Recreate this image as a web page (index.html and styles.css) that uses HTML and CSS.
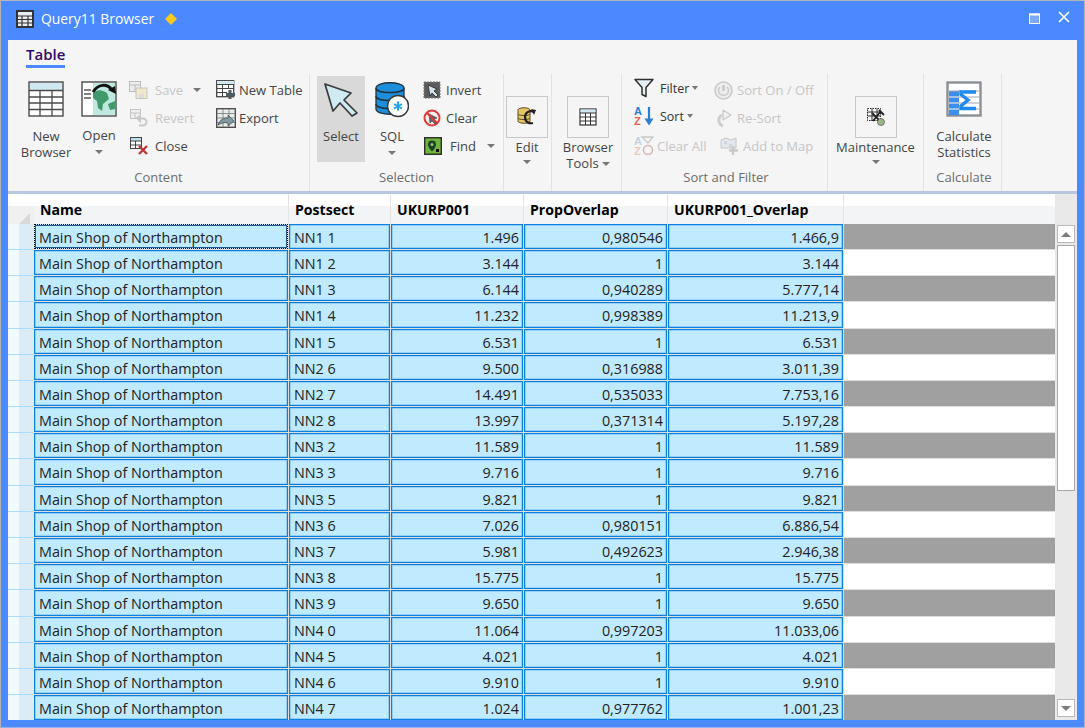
FILE: index.html
```html
<!DOCTYPE html>
<html lang="en">
<head>
<meta charset="utf-8">
<title>Query11 Browser</title>
<link rel="stylesheet" href="styles.css">
</head>
<body>
<div class="window">
  <header class="titlebar">
    <svg class="title-icon" width="18" height="18" viewBox="0 0 18 18"><rect x="1" y="1" width="16" height="16" fill="#e8eef2" stroke="#333" stroke-width="2"/><path d="M1 6h16M1 9.500h16M1 13h16M6 6v11M12 6v11" stroke="#333" stroke-width="1.200" fill="none"/></svg>
    <span class="title-text">Query11 Browser</span>
    <svg class="title-diamond" width="12" height="12" viewBox="0 0 12 12"><path d="M6 0l6 6-6 6-6-6z" fill="#f7c91c"/></svg>
    <span class="title-space"></span>
    <svg class="win-btn" width="11" height="11" viewBox="0 0 11 11"><rect x=".5" y="1" width="10" height="9.500" fill="#7fa9f5" stroke="#fff"/><path d="M0 1.500h11" stroke="#fff" stroke-width="2"/></svg>
    <svg class="win-btn win-close" width="12" height="12" viewBox="0 0 12 12"><path d="M1 1l10 10M11 1L1 11" stroke="#fff" stroke-width="1.600"/></svg>
  </header>

  <section class="ribbon">
    <div class="tabs"><span class="tab">Table</span></div>
    <div class="groups">

      <div class="group g-content">
        <div class="group-body">
          <div class="large w-new">
            <svg class="ico-top" width="36" height="36" viewBox="0 0 36 36"><rect x="1" y="1" width="34" height="34" fill="#fff" stroke="#4a4a4a" stroke-width="1.400"/><rect x="2" y="2" width="32" height="7.500" fill="#cfe8f1"/><path d="M1 9.500h34M1 16h34M1 22h34M1 28.500h34M12 9.500V35M24 9.500V35" stroke="#4a4a4a" stroke-width="1.300" fill="none"/></svg>
            <span class="lbl lbl-first">New</span><span class="lbl">Browser</span>
          </div>
          <div class="large w-open">
            <svg class="ico-top" width="36" height="36" viewBox="0 0 36 36"><rect x="1" y="1" width="34" height="34" fill="#fff" stroke="#4a4a4a" stroke-width="1.400"/><rect x="12" y="2" width="22" height="32" fill="#bfe8e0"/><path d="M12 12c5-4 9-3 14 0l2 6-6 5-1 7-4-3-1-7-4-3z" fill="#3f9a6c"/><path d="M27 23l7-3v8l-5 1z" fill="#3f9a6c"/><path d="M3 9h7M3 13h7M3 17h7" stroke="#555" stroke-width="1.500"/><path d="M12 11c5-8 14-9 19-2" fill="none" stroke="#111" stroke-width="3"/><path d="M27 9l8 4-1-8z" fill="#111"/></svg>
            <span class="lbl lbl-open">Open</span><i class="caret caret-below"></i>
          </div>
          <div class="small-col w-save">
            <div class="small off"><svg class="ico-s" width="20" height="18" viewBox="0 0 20 18"><rect x=".5" y=".5" width="11" height="10" fill="#eee" stroke="#bbb"/><path d="M.5 4h11M6 4v7" stroke="#bbb"/><rect x="7" y="7" width="11" height="10.500" fill="#f1e8cc" stroke="#c4c4c4"/><rect x="10" y="13" width="5" height="4" fill="#ddd"/></svg><span>Save</span><i class="caret caret-save"></i></div>
            <div class="small off"><svg class="ico-s" width="20" height="18" viewBox="0 0 20 18"><rect x="1.500" y=".5" width="10" height="9" fill="#eee" stroke="#c4c4c4"/><path d="M1.500 4h10M6 4v6" stroke="#c4c4c4"/><path d="M8 9l3-2v5zM10 9.500h4a3.500 3.500 0 0 1 0 7h-4" fill="none" stroke="#c9c9c9" stroke-width="2"/></svg><span>Revert</span></div>
            <div class="small"><svg class="ico-s" width="20" height="18" viewBox="0 0 20 18"><rect x="1.500" y=".5" width="11" height="11" fill="#fff" stroke="#444"/><rect x="2" y="1" width="10" height="3" fill="#bfe3ee"/><path d="M1.500 4h11M1.500 8h11M6.500 4v8" stroke="#444"/><path d="M10 9l8 8M18 9l-8 8" stroke="#c0353a" stroke-width="2.400"/></svg><span>Close</span></div>
          </div>
          <div class="small-col w-newtable">
            <div class="small tight"><svg class="ico-xs" width="20" height="20" viewBox="0 0 20 20"><rect x=".7" y=".7" width="17" height="16" fill="#fff" stroke="#444" stroke-width="1.300"/><rect x="1" y="1" width="17" height="3" fill="#cfe8f1"/><path d="M1 4.500h17M1 8.500h17M1 12.500h10M6.500 4.500v12M12.500 4.500v4" stroke="#444"/><path d="M14 10v9M10 14.500h9" stroke="#4f5b62" stroke-width="3"/></svg><span>New Table</span></div>
            <div class="small tight"><svg class="ico-xs" width="20" height="20" viewBox="0 0 20 20"><rect x=".7" y=".7" width="18.600" height="18.600" fill="#e6ece8" stroke="#444" stroke-width="1.300"/><path d="M1 5.500h18M1 10h18M1 14.500h18M7 1v18M13 1v18" stroke="#777" stroke-width=".8"/><path d="M2 17c2-6 6-7 10-7v-3l6 6-6 5v-3c-4-1-6 0-10 2z" fill="#7f99a2" stroke="#444" stroke-width=".7"/></svg><span>Export</span></div>
          </div>
        </div>
        <div class="group-label">Content</div>
      </div>

      <div class="group g-selection">
        <div class="group-body">
          <div class="large w-select active">
            <svg class="ico-select" width="34" height="34" viewBox="0 0 34 34"><path d="M1 1l26 9-7 7 13 13-5 3-12-13-7 8z" fill="#cfeaf2" stroke="#3a3a3a" stroke-width="1.700" stroke-linejoin="round"/></svg>
            <span class="lbl lbl-select">Select</span>
          </div>
          <div class="large w-sql">
            <svg class="ico-sql" width="34" height="36" viewBox="0 0 34 36"><path d="M1 6c0-7 28-7 28 0v21c0 7-28 7-28 0z" fill="#1b8fdb" stroke="#24323c" stroke-width="1.300"/><path d="M1 6c0 6 28 6 28 0M1 14c0 6 28 6 28 0M1 22c0 6 28 6 28 0" fill="none" stroke="#24323c" stroke-width="1.500"/><circle cx="23" cy="24" r="10.500" fill="#fff" stroke="#3a3a3a" stroke-width="1.500"/><path d="M23 19.500v9M19 22l8 4.500M27 22l-8 4.500" stroke="#22a0ee" stroke-width="2"/></svg>
            <span class="lbl lbl-open">SQL</span><i class="caret caret-below"></i>
          </div>
          <div class="small-col w-invert">
            <div class="small"><svg class="ico-s2" width="18" height="18" viewBox="0 0 18 18"><rect x="1" y="1" width="16" height="16" fill="#5c5c5c" stroke="#777" stroke-dasharray="2 1"/><path d="M5 4l9 4-3 2 4 4-2 2-4-4-2 3z" fill="#cfe3ea" stroke="#222" stroke-width=".8"/></svg><span>Invert</span></div>
            <div class="small"><svg class="ico-s2" width="18" height="18" viewBox="0 0 18 18"><circle cx="9" cy="9" r="7.500" fill="#f5f0f0" stroke="#e03a3a" stroke-width="2"/><path d="M6 5l8 4-3 1 3 4-2 1-3-3-2 2z" fill="#666" stroke="#333" stroke-width=".6"/><path d="M4 4l10 10" stroke="#e03a3a" stroke-width="2"/></svg><span>Clear</span></div>
            <div class="small"><svg class="ico-s3" width="18" height="18" viewBox="0 0 18 18"><rect x=".7" y=".7" width="16.600" height="16.600" fill="#6fb53a" stroke="#2d2d2d" stroke-width="1.400"/><path d="M8 3.500a4 4 0 0 1 4 4c0 3-4 7-4 7s-4-4-4-7a4 4 0 0 1 4-4z" fill="#1e3d2a"/><circle cx="8" cy="7.500" r="1.500" fill="#8fcf5f"/><rect x="12" y="12" width="3" height="3" fill="#111"/></svg><span>Find</span><i class="caret caret-find"></i></div>
          </div>
        </div>
        <div class="group-label">Selection</div>
      </div>

      <div class="group g-edit">
        <div class="group-body">
          <div class="large w-edit">
            <div class="box"><svg width="20" height="20" viewBox="0 0 20 20"><path d="M1 3c0-3 12-3 12 0v11c0 3-12 3-12 0z" fill="#e6c566" stroke="#5c4d1e"/><path d="M1 7c0 2 12 2 12 0M1 11c0 2 12 2 12 0" fill="none" stroke="#5c4d1e"/><path d="M17 5c-4-2-9 0-9 5s4 7 8 6" fill="none" stroke="#222" stroke-width="2.200"/><path d="M14 2l5 1-2 5z" fill="#222"/></svg></div>
            <span class="lbl lbl-box">Edit</span><i class="caret caret-below2"></i>
          </div>
        </div>
      </div>

      <div class="group g-tools">
        <div class="group-body">
          <div class="large w-tools">
            <div class="box"><svg width="18" height="18" viewBox="0 0 18 18"><rect x="1" y="1" width="16" height="16" fill="#fff" stroke="#333" stroke-width="1.200"/><rect x="1.500" y="1.500" width="15" height="3.500" fill="#cfe8f1"/><path d="M1 5h16M1 9h16M1 13h16M6.500 5v12M11.500 5v12" stroke="#333" fill="none"/></svg></div>
            <span class="lbl lbl-box">Browser</span><span class="lbl">Tools<i class="caret caret-inline"></i></span>
          </div>
        </div>
      </div>

      <div class="group g-sort">
        <div class="group-body">
          <div class="small-col w-filter">
            <div class="small up sm"><svg class="ico-filter" width="20" height="20" viewBox="0 0 20 20"><path d="M1 1.500h18l-7 8v9l-4-2v-7z" fill="#e4f0f3" stroke="#2f2f2f" stroke-width="1.500" stroke-linejoin="round"/></svg><span>Filter</span><i class="caret caret-inline"></i></div>
            <div class="small up sm"><svg class="ico-filter" width="20" height="20" viewBox="0 0 20 20" aria-hidden="true"><text x="0" y="9" class="az az-a">A</text><text x="0" y="19" class="az az-z">Z</text><path d="M15 1v15" stroke="#2b7cd3" stroke-width="2.200"/><path d="M10.500 12.500h9L15 19.500z" fill="#2b7cd3"/></svg><span>Sort</span><i class="caret caret-inline"></i></div>
            <div class="small off"><svg class="ico-clear" width="20" height="20" viewBox="0 0 20 20" aria-hidden="true"><text x="0" y="9" class="az az-off">A</text><text x="0" y="19" class="az az-off2">Z</text><path d="M8 1h11l-5 6-6-6z" fill="none" stroke="#c9c9c9" stroke-width="1.300"/><circle cx="14" cy="14" r="4.500" fill="none" stroke="#d5b5b5" stroke-width="1.500"/></svg><span>Clear All</span></div>
          </div>
          <div class="small-col w-sorton">
            <div class="small off"><svg class="ico-s4" width="19" height="19" viewBox="0 0 19 19"><circle cx="9.500" cy="9.500" r="8.500" fill="#eee" stroke="#c9c9c9" stroke-width="1.600"/><path d="M9.500 4v6" stroke="#c4c4c4" stroke-width="2.200"/><path d="M6 6a5 5 0 1 0 7 0" fill="none" stroke="#c9c9c9" stroke-width="1.500"/></svg><span>Sort On / Off</span></div>
            <div class="small off"><svg class="ico-s4" width="19" height="19" viewBox="0 0 19 19"><path d="M9 17a6 6 0 0 1-1-11" fill="none" stroke="#cfcfcf" stroke-width="3"/><path d="M9 1l8 5-8 5z" fill="#f0f0f0" stroke="#c9c9c9" stroke-width="1.200" stroke-linejoin="round"/></svg><span>Re-Sort</span></div>
            <div class="small off shifted"><svg class="ico-s4" width="19" height="19" viewBox="0 0 19 19"><path d="M1 3l5-2 5 2 5-2v10H1z" fill="#e4e8ee" stroke="#c6c6c6"/><path d="M4 4h3v3H4zM9 7h3v3H9z" fill="#cdd7e0"/><path d="M13 9v9M9 13.500h9" stroke="#c9c9c9" stroke-width="2.400"/></svg><span>Add to Map</span></div>
          </div>
        </div>
        <div class="group-label">Sort and Filter</div>
      </div>

      <div class="group g-maint">
        <div class="group-body">
          <div class="large w-maint">
            <div class="box"><svg width="18" height="18" viewBox="0 0 18 18"><rect x=".5" y=".5" width="13" height="12" fill="#f4f4f4" stroke="#222" stroke-dasharray="1.500 1"/><path d="M.5 4h13M.5 8h13M5 1v12M10 1v8" stroke="#333"/><path d="M5 5l9 9M14 3l-8 10M12 2l5 5" stroke="#222" stroke-width="1.800"/><circle cx="14" cy="14" r="3.500" fill="#9db88c" stroke="#555" stroke-width=".7"/></svg></div>
            <span class="lbl lbl-box">Maintenance</span><i class="caret caret-below2"></i>
          </div>
        </div>
      </div>

      <div class="group g-calc">
        <div class="group-body">
          <div class="large w-calc">
            <svg class="ico-top" width="36" height="36" viewBox="0 0 36 36"><rect x="1.500" y="1.500" width="33" height="33" fill="#fff" stroke="#8a8f94" stroke-width="2.400"/><rect x="3" y="10" width="10" height="24" fill="#3a8fee"/><path d="M3 10h30M3 16h30M3 22h30M3 28h30" stroke="#9ea6ad"/><path d="M3 16h10M3 22h10M3 28h10" stroke="#dbe9f8"/><path d="M30 11H15v2.500l7 5.500-7 6v2.500h15" fill="none" stroke="#1f8af0" stroke-width="3.400"/></svg>
            <span class="lbl lbl-first lbl-calc">Calculate</span><span class="lbl">Statistics</span>
          </div>
        </div>
        <div class="group-label">Calculate</div>
      </div>

    </div>
  </section>

  <main class="grid-area">
    <div class="table">
      <div class="row head">
        <div class="corner"><i class="corner-tri"></i></div>
        <div class="hcell">Name</div><div class="hcell">Postsect</div><div class="hcell">UKURP001</div><div class="hcell">PropOverlap</div><div class="hcell">UKURP001_Overlap</div><div class="hcell hfill"></div>
      </div>
      <div class="row"><div class="rh"></div><div class="cell focus">Main Shop of Northampton</div><div class="cell">NN1 1</div><div class="cell num">1.496</div><div class="cell num">0,980546</div><div class="cell num">1.466,9</div><div class="fill gray"></div></div>
      <div class="row"><div class="rh"></div><div class="cell">Main Shop of Northampton</div><div class="cell">NN1 2</div><div class="cell num">3.144</div><div class="cell num">1</div><div class="cell num">3.144</div><div class="fill"></div></div>
      <div class="row"><div class="rh"></div><div class="cell">Main Shop of Northampton</div><div class="cell">NN1 3</div><div class="cell num">6.144</div><div class="cell num">0,940289</div><div class="cell num">5.777,14</div><div class="fill gray"></div></div>
      <div class="row"><div class="rh"></div><div class="cell">Main Shop of Northampton</div><div class="cell">NN1 4</div><div class="cell num">11.232</div><div class="cell num">0,998389</div><div class="cell num">11.213,9</div><div class="fill"></div></div>
      <div class="row"><div class="rh"></div><div class="cell">Main Shop of Northampton</div><div class="cell">NN1 5</div><div class="cell num">6.531</div><div class="cell num">1</div><div class="cell num">6.531</div><div class="fill gray"></div></div>
      <div class="row"><div class="rh"></div><div class="cell">Main Shop of Northampton</div><div class="cell">NN2 6</div><div class="cell num">9.500</div><div class="cell num">0,316988</div><div class="cell num">3.011,39</div><div class="fill"></div></div>
      <div class="row"><div class="rh"></div><div class="cell">Main Shop of Northampton</div><div class="cell">NN2 7</div><div class="cell num">14.491</div><div class="cell num">0,535033</div><div class="cell num">7.753,16</div><div class="fill gray"></div></div>
      <div class="row"><div class="rh"></div><div class="cell">Main Shop of Northampton</div><div class="cell">NN2 8</div><div class="cell num">13.997</div><div class="cell num">0,371314</div><div class="cell num">5.197,28</div><div class="fill"></div></div>
      <div class="row"><div class="rh"></div><div class="cell">Main Shop of Northampton</div><div class="cell">NN3 2</div><div class="cell num">11.589</div><div class="cell num">1</div><div class="cell num">11.589</div><div class="fill gray"></div></div>
      <div class="row"><div class="rh"></div><div class="cell">Main Shop of Northampton</div><div class="cell">NN3 3</div><div class="cell num">9.716</div><div class="cell num">1</div><div class="cell num">9.716</div><div class="fill"></div></div>
      <div class="row"><div class="rh"></div><div class="cell">Main Shop of Northampton</div><div class="cell">NN3 5</div><div class="cell num">9.821</div><div class="cell num">1</div><div class="cell num">9.821</div><div class="fill gray"></div></div>
      <div class="row"><div class="rh"></div><div class="cell">Main Shop of Northampton</div><div class="cell">NN3 6</div><div class="cell num">7.026</div><div class="cell num">0,980151</div><div class="cell num">6.886,54</div><div class="fill"></div></div>
      <div class="row"><div class="rh"></div><div class="cell">Main Shop of Northampton</div><div class="cell">NN3 7</div><div class="cell num">5.981</div><div class="cell num">0,492623</div><div class="cell num">2.946,38</div><div class="fill gray"></div></div>
      <div class="row"><div class="rh"></div><div class="cell">Main Shop of Northampton</div><div class="cell">NN3 8</div><div class="cell num">15.775</div><div class="cell num">1</div><div class="cell num">15.775</div><div class="fill"></div></div>
      <div class="row"><div class="rh"></div><div class="cell">Main Shop of Northampton</div><div class="cell">NN3 9</div><div class="cell num">9.650</div><div class="cell num">1</div><div class="cell num">9.650</div><div class="fill gray"></div></div>
      <div class="row"><div class="rh"></div><div class="cell">Main Shop of Northampton</div><div class="cell">NN4 0</div><div class="cell num">11.064</div><div class="cell num">0,997203</div><div class="cell num">11.033,06</div><div class="fill"></div></div>
      <div class="row"><div class="rh"></div><div class="cell">Main Shop of Northampton</div><div class="cell">NN4 5</div><div class="cell num">4.021</div><div class="cell num">1</div><div class="cell num">4.021</div><div class="fill gray"></div></div>
      <div class="row"><div class="rh"></div><div class="cell">Main Shop of Northampton</div><div class="cell">NN4 6</div><div class="cell num">9.910</div><div class="cell num">1</div><div class="cell num">9.910</div><div class="fill"></div></div>
      <div class="row"><div class="rh"></div><div class="cell">Main Shop of Northampton</div><div class="cell">NN4 7</div><div class="cell num">1.024</div><div class="cell num">0,977762</div><div class="cell num">1.001,23</div><div class="fill gray"></div></div>
    </div>
    <aside class="scrollbar">
      <div class="sb-btn"><i class="sb-up"></i></div>
      <div class="sb-thumb"></div>
      <div class="sb-track"></div>
      <div class="sb-btn"><i class="sb-down"></i></div>
    </aside>
  </main>
</div>
</body>
</html>
```

FILE: styles.css
```css
* { box-sizing: border-box; }
html, body { margin: 0; padding: 0; height: 100%; overflow: hidden; }
body {
  font-family: "Open Sans", "Noto Sans", sans-serif;
  font-size: 13px;
  color: #444;
  background: #fff;
}
i { display: inline-block; }
svg { display: block; flex: none; }

.window {
  width: 1085px;
  height: 728px;
  background: #4a89ff;
  border: 1px solid #b4b4b4;
  border-bottom-color: #8fb3f5;
  padding: 0 7px 7px;
  display: flex;
  flex-direction: column;
}

/* title bar */
.titlebar {
  height: 39px;
  flex: none;
  display: flex;
  align-items: center;
  color: #fff;
  padding: 0 7px 4px 8px;
}
.title-icon { margin-right: 7px; }
.title-text { font-size: 13.9px; }
.title-diamond { margin-left: 11px; }
.title-space { flex: 1; }
.win-btn { margin-right: 18px; }
.win-close { margin-right: 0; margin-top: -3px; }

/* ribbon */
.ribbon {
  height: 154px;
  flex: none;
  background: #f5f5f5;
  border-bottom: 3px solid #b8c6de;
  display: flex;
  flex-direction: column;
}
.tabs { height: 36px; flex: none; padding: 5px 0 0 18px; }
.tab {
  display: inline-block;
  height: 23px;
  line-height: 18px;
  font-size: 15px;
  font-weight: 600;
  color: #2d0a6a;
  border-bottom: 3px solid #4a89ff;
}
.groups { flex: 1; display: flex; }
.group {
  display: flex;
  flex-direction: column;
  border-right: 1px solid #e3e3e3;
  margin-top: -2px;
  padding-top: 2px;
}
.group-body { height: 86px; flex: none; display: flex; }
.group-label {
  height: 27px;
  line-height: 31px;
  text-align: center;
  color: #6d6d6d;
}
.g-content { width: 302px; }
.g-content .group-body { padding-left: 13px; }
.g-selection { width: 194px; }
.g-selection .group-body { padding-left: 7px; }
.g-edit { width: 48px; }
.g-tools { width: 70px; padding-left: 2px; }
.g-sort { width: 206px; }
.g-sort .group-body { padding-left: 12px; }
.g-sort .group-label { padding-left: 3px; }
.g-maint { width: 96px; }
.g-calc { width: 78px; padding-left: 3px; }

/* large buttons */
.large { display: flex; flex-direction: column; align-items: center; flex: none; }
.lbl { line-height: 16px; white-space: nowrap; display: block; flex: none; }
.ico-top { margin-top: 5px; }
.lbl-first { margin-top: 11px; }
.lbl-open { margin-top: 10px; }
.lbl-select { margin-top: 11px; }
.lbl-box { margin-top: 1px; }
.lbl-calc { margin-top: 11px; }
.w-new { width: 50px; }
.w-open { width: 46px; margin-left: 5px; }
.w-save { width: 87px; margin-left: 7px; }
.w-newtable { width: 90px; }
.w-select { width: 48px; }
.w-select.active { background: #d9d9d9; }
.ico-select { margin-top: 7px; }
.w-sql { width: 36px; margin-left: 9px; }
.ico-sql { margin-top: 6px; }
.w-invert { margin-left: 13px; width: 80px; }
.w-edit { width: 46px; }
.w-tools { width: 68px; }
.w-maint { width: 95px; }
.w-calc { width: 74px; }
.box {
  width: 42px;
  height: 42px;
  flex: none;
  margin-top: 20px;
  border: 1px solid #c8c8c8;
  display: flex;
  align-items: center;
  justify-content: center;
}

/* small buttons */
.small-col { display: flex; flex-direction: column; flex: none; }
.small { height: 28px; display: flex; align-items: center; white-space: nowrap; }
.off { color: #c6c6c6; }
.ico-s { margin-right: 6px; }
.ico-s2 { margin-right: 5px; }
.ico-s3 { margin-right: 8px; margin-left: 1px; }
.ico-s4 { margin-right: 4px; }
.ico-xs { margin-right: 3px; }
.ico-filter { margin-right: 6px; }
.ico-clear { margin-right: 3px; }
.tight { padding-bottom: 1px; }
.up { padding-bottom: 4px; }
.sm { font-size: 12.5px; color: #333; }
.w-filter { width: 80px; }
.w-sorton { width: 110px; }
.shifted { margin-left: 6px; }

/* carets */
.caret {
  width: 0;
  height: 0;
  border-left: 4px solid transparent;
  border-right: 4px solid transparent;
  border-top: 4px solid #777;
}
.caret-below { margin-top: 7px; }
.caret-below2 { margin-top: 5px; }
.caret-save { margin-left: 10px; }
.caret-find { margin-left: 11px; }
.caret-inline { margin-left: 3px; vertical-align: 2px; }
.sm .caret-inline { border-width: 4px 3.500px 0; }

/* sort icon letters */
.az { font-family: "Liberation Sans", sans-serif; font-size: 11px; font-weight: 700; }
.az-a { fill: #2b7cd3; }
.az-z { fill: #e8604c; }
.az-off { fill: #c5d2de; }
.az-off2 { fill: #e8c8c2; }

/* grid */
.grid-area { flex: 1; min-height: 0; display: flex; background: #fff; }
.table { width: 1047px; flex: none; overflow: hidden; }
.row {
  display: grid;
  grid-template-columns: 26px 255px 102px 133px 144px 176px 211px;
  height: 26.2px;
  background: #dedede;
}
.head {
  height: 29.8px;
  background: linear-gradient(#fff 12px, #f3f4f6 12px);
  color: #000;
  font-weight: 700;
  font-size: 14.1px;
}
.corner { display: flex; align-items: flex-end; justify-content: flex-end; padding: 0 4px 3px 0; background: linear-gradient(#fff 12px, #f0f0f0 12px); }
.corner-tri { width: 0; height: 0; border-bottom: 11px solid #d9d9d9; border-left: 11px solid transparent; }
.hcell {
  padding: 0 0 0 6px;
  line-height: 32px;
  border-right: 1px solid #e4e4e4;
  border-bottom: 1px solid #e6e6e6;
  white-space: nowrap;
}
.hfill { border-right: 0; }
.rh {
  background: linear-gradient(90deg, #f2f9ff 11px, #dcecf6 11px);
  border-bottom: 1px solid #a9dcff;
}
.cell {
  background: #c0eaff;
  border: 1px solid #0d80dc;
  box-shadow: inset 0 0 0 .5px rgba(13, 128, 220, .5);
  margin: 0 1px 1px 0;
  padding: 0 3px 0 4px;
  font-size: 14.35px;
  line-height: 25px;
  color: #222;
  white-space: nowrap;
  overflow: hidden;
}
.num { text-align: right; }
.focus { border: 1px dotted #000; box-shadow: inset 0 0 0 1px #1c5a96; }
.fill { background: #fff; margin-bottom: 1px; }
.gray { background: #a0a0a0; }

/* scrollbar */
.scrollbar {
  width: 22px;
  flex: none;
  background: #e9e9e9;
  padding: 31px 2px 3px;
  display: flex;
  flex-direction: column;
}
.sb-btn {
  height: 18px;
  flex: none;
  background: #fff;
  border: 1px solid #b8b8b8;
  display: flex;
  align-items: center;
  justify-content: center;
}
.sb-up { width: 0; height: 0; border: 5px solid transparent; border-top: 0; border-bottom: 5px solid #7c7c7c; }
.sb-down { width: 0; height: 0; border: 5px solid transparent; border-bottom: 0; border-top: 5px solid #7c7c7c; }
.sb-thumb { height: 246px; flex: none; margin-top: 2px; background: #fff; border: 1px solid #a8a8a8; }
.sb-track { flex: 1; }
```
